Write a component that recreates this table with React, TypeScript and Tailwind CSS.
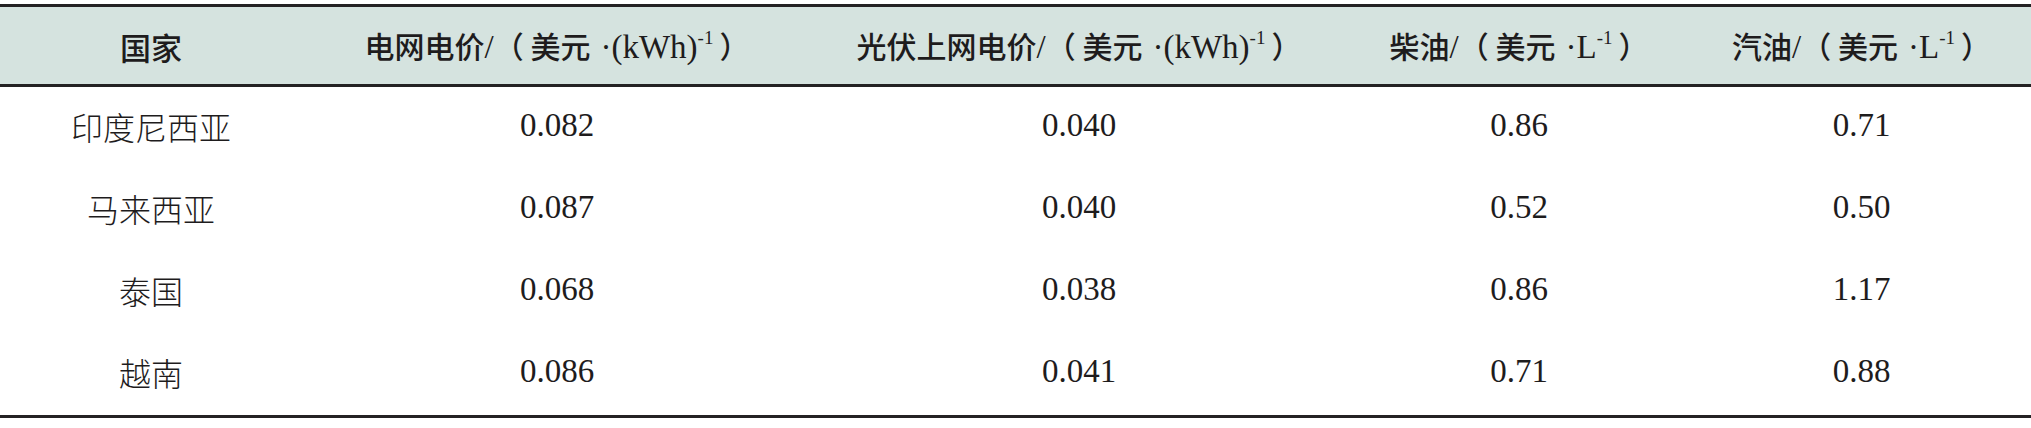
const cols = "grid grid-cols-[302px_510px_534px_346px_1fr]";

const rows = [
  { country: "印度尼西亚", grid: "0.082", pv: "0.040", diesel: "0.86", petrol: "0.71" },
  { country: "马来西亚", grid: "0.087", pv: "0.040", diesel: "0.52", petrol: "0.50" },
  { country: "泰国", grid: "0.068", pv: "0.038", diesel: "0.86", petrol: "1.17" },
  { country: "越南", grid: "0.086", pv: "0.041", diesel: "0.71", petrol: "0.88" },
];

const cjk = "font-['Noto_Sans_CJK_SC']";
const serif = "font-['Liberation_Serif']";

function Unit({ label, unit }: { label: string; unit: string }) {
  return (
    <span className="whitespace-nowrap">
      <span className={`${cjk} font-medium`}>{label}</span>
      <span className={`${serif} text-[33px]`}>/</span>
      <span className={`${cjk} font-medium`}>（ 美元</span>
      <span className={`${serif} text-[33px] ml-[10px]`}>·{unit}</span>
      <sup className={`${serif} text-[19px] relative -top-[14px]`}>-1</sup>
      <span className={`${cjk} font-medium ml-[6px]`}>）</span>
    </span>
  );
}

export default function App() {
  return (
    <div className="w-[2031px] h-[428px] bg-white pt-[4px] text-[#1e1c1d]">
      <div className="border-t-[3px] border-b-[3px] border-[#242223]">
        {/* header */}
        <div
          className={`${cols} h-[80px] items-center pt-[4px] bg-[#d5e3df] border-b-[3px] border-[#242223] text-[31px]`}
        >
          <div className={`text-center ${cjk} font-medium`}>国家</div>
          <div className="text-center text-[30px]">
            <Unit label="电网电价" unit="(kWh)" />
          </div>
          <div className="text-center text-[30px]">
            <Unit label="光伏上网电价" unit="(kWh)" />
          </div>
          <div className="text-center text-[30px]">
            <Unit label="柴油" unit="L" />
          </div>
          <div className="text-center text-[30px]">
            <Unit label="汽油" unit="L" />
          </div>
        </div>

        {/* body */}
        {rows.map((r) => (
          <div
            key={r.country}
            className={`${cols} h-[82px] items-center pb-[4px] text-[33px] ${serif}`}
          >
            <div className={`text-center ${cjk} text-[32px] font-light`}>{r.country}</div>
            <div className="text-center">{r.grid}</div>
            <div className="text-center">{r.pv}</div>
            <div className="text-center">{r.diesel}</div>
            <div className="text-center">{r.petrol}</div>
          </div>
        ))}
      </div>
    </div>
  );
}
